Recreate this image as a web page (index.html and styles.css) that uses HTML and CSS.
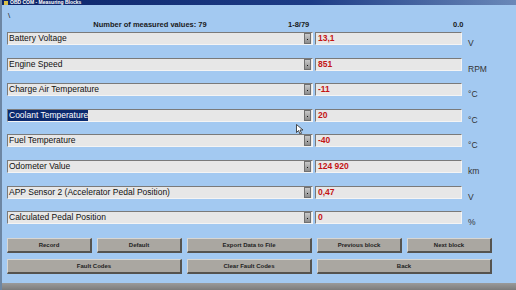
FILE: index.html
```html
<!DOCTYPE html>
<html lang="en">
<head>
    <meta charset="UTF-8">
    <meta name="viewport" content="width=device-width, initial-scale=1.0">
    <title>Measuring Blocks</title>
    <link rel="stylesheet" href="styles.css">
</head>
<body>
    <div class="titlebar">
        <span class="title-icon"></span>
        <span class="title-text">OBD COM - Measuring Blocks</span>
    </div>

    <div class="window">
        <div class="info">
            <span class="slash">\</span>
            <div class="info-line">
                <span class="count">Number of measured values: 79</span>
                <span class="range">1-8/79</span>
                <span class="time">0.0</span>
            </div>
        </div>

        <div class="rows">
            <div class="row">
                <div class="combo"><span class="combo-text">Battery Voltage</span><span class="combo-btn"></span></div>
                <div class="value">13,1</div>
                <div class="unit">V</div>
            </div>
            <div class="row">
                <div class="combo"><span class="combo-text">Engine Speed</span><span class="combo-btn"></span></div>
                <div class="value">851</div>
                <div class="unit">RPM</div>
            </div>
            <div class="row">
                <div class="combo"><span class="combo-text">Charge Air Temperature</span><span class="combo-btn"></span></div>
                <div class="value">-11</div>
                <div class="unit">°C</div>
            </div>
            <div class="row">
                <div class="combo"><span class="combo-text selected">Coolant Temperature</span><span class="combo-btn"></span></div>
                <div class="value">20</div>
                <div class="unit">°C</div>
                <svg class="cursor" width="8" height="11" viewBox="0 0 8 11">
                    <path d="M0.5 0.5 L0.5 8.5 L2.5 6.5 L4 10 L5.5 9.3 L4 6 L7 6 Z" fill="#fff" stroke="#222" stroke-width="0.8"/>
                </svg>
            </div>
            <div class="row">
                <div class="combo"><span class="combo-text">Fuel Temperature</span><span class="combo-btn"></span></div>
                <div class="value">-40</div>
                <div class="unit">°C</div>
            </div>
            <div class="row">
                <div class="combo"><span class="combo-text">Odometer Value</span><span class="combo-btn"></span></div>
                <div class="value">124 920</div>
                <div class="unit">km</div>
            </div>
            <div class="row">
                <div class="combo"><span class="combo-text">APP Sensor 2 (Accelerator Pedal Position)</span><span class="combo-btn"></span></div>
                <div class="value">0,47</div>
                <div class="unit">V</div>
            </div>
            <div class="row">
                <div class="combo"><span class="combo-text">Calculated Pedal Position</span><span class="combo-btn"></span></div>
                <div class="value">0</div>
                <div class="unit">%</div>
            </div>
        </div>

        <div class="buttons">
            <button class="btn">Record</button>
            <button class="btn">Default</button>
            <button class="btn">Export Data to File</button>
            <button class="btn">Previous block</button>
            <button class="btn">Next block</button>
            <button class="btn span2">Fault Codes</button>
            <button class="btn">Clear Fault Codes</button>
            <button class="btn span2">Back</button>
        </div>
    </div>

    <div class="statusbar"></div>
</body>
</html>
```

FILE: styles.css
```css
body {
    margin: 0;
    width: 516px;
    height: 290px;
    overflow: hidden;
    background-color: #a3c9f1;
    font-family: "Liberation Sans", Arial, sans-serif;
    border-left: 2px solid #6d86a3;
    box-sizing: border-box;
}

.titlebar {
    height: 5px;
    background: linear-gradient(to right, #0c2468, #1d3c86 60%, #6a88b8);
    display: flex;
    align-items: center;
    gap: 2px;
    padding-left: 2px;
    overflow: hidden;
}

.title-icon {
    width: 4px;
    height: 4px;
    background-color: #d8c04a;
}

.title-text {
    color: #fff;
    font-size: 5px;
    font-weight: bold;
    line-height: 5px;
}

.window {
    padding-left: 5px;
}

.info {
    height: 27px;
    position: relative;
}

.slash {
    position: absolute;
    left: 1px;
    top: 6px;
    font-size: 8px;
    color: #222;
}

.info-line {
    display: flex;
    padding-top: 15px;
    font-size: 7.5px;
    font-weight: bold;
    color: #1a1a1a;
}

.count {
    width: 280px;
    text-align: center;
    padding-left: 6px;
    box-sizing: border-box;
}

.range {
    width: 140px;
    padding-left: 1px;
}

.time {
    width: 40px;
    padding-left: 25px;
}

.rows {
    display: flex;
    flex-direction: column;
    gap: 12.6px;
}

.row {
    display: flex;
    height: 13px;
    position: relative;
}

.combo {
    width: 306px;
    height: 13px;
    box-sizing: border-box;
    background-color: #e7e7e7;
    border-top: 1px solid #7a7a7a;
    border-left: 1px solid #7a7a7a;
    border-bottom: 1px solid #f4f4f4;
    border-right: 1px solid #f4f4f4;
    display: flex;
    align-items: center;
    justify-content: space-between;
}

.combo-text {
    font-size: 8.5px;
    color: #111;
    padding-left: 1px;
    line-height: 11px;
}

.combo-text.selected {
    background-color: #0b2a6e;
    color: #fff;
}

.combo-btn {
    width: 5px;
    height: 9px;
    margin-right: 1px;
    background: linear-gradient(#c9c9c9, #8d8d8d);
    border: 1px solid #707070;
    position: relative;
}

.combo-btn::after {
    content: "";
    position: absolute;
    left: 2px;
    top: 5px;
    width: 1px;
    height: 1px;
    background-color: #111;
}

.value {
    width: 147px;
    height: 13px;
    margin-left: 2px;
    box-sizing: border-box;
    background-color: #e7e7e7;
    border-top: 1px solid #7a7a7a;
    border-left: 1px solid #7a7a7a;
    border-bottom: 1px solid #f4f4f4;
    border-right: 1px solid #f4f4f4;
    color: #c41414;
    font-size: 8.5px;
    font-weight: bold;
    line-height: 11px;
    padding-left: 2px;
}

.unit {
    margin-left: 6px;
    padding-top: 6px;
    font-size: 8.5px;
    color: #333;
}

.cursor {
    position: absolute;
    left: 289px;
    top: 15px;
}

.buttons {
    display: grid;
    grid-template-columns: 85px 85px 125px 85px 85px;
    grid-auto-rows: 15px;
    column-gap: 5px;
    row-gap: 6px;
    margin-top: 14px;
}

.btn {
    margin: 0;
    padding: 0;
    background-color: #aaa7a1;
    border-top: 1px solid #d8d6d2;
    border-left: 1px solid #d8d6d2;
    border-bottom: 2px solid #55534f;
    border-right: 2px solid #55534f;
    font-family: "Liberation Sans", Arial, sans-serif;
    font-size: 6px;
    font-weight: bold;
    color: #222;
}

.span2 {
    grid-column: span 2;
}

.statusbar {
    margin-top: 9px;
    height: 7px;
    background: linear-gradient(#9a9a9a, #7c7c7c);
}
```
